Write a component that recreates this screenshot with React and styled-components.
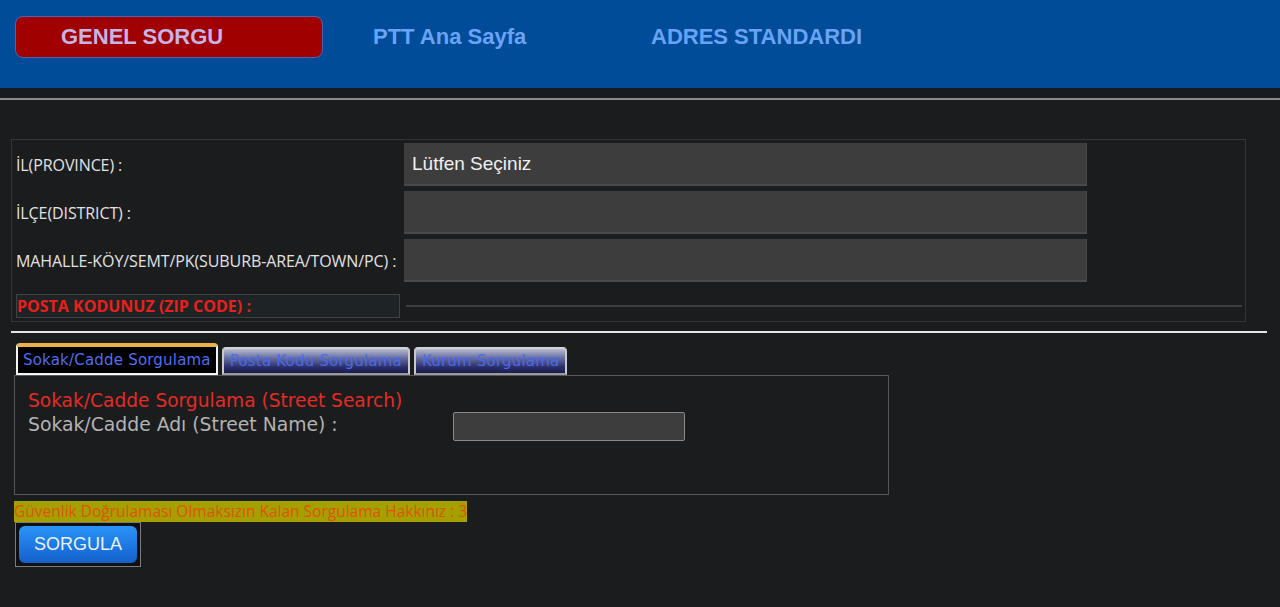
import React from "react"
import styled, {createGlobalStyle} from "styled-components"

const GlobalStyle = createGlobalStyle`
  html, body {
    margin: 0;
    padding: 0;
    background: #1b1c1e;
  }
  body {
    font-family: "Liberation Sans", Arial, sans-serif;
  }
`

const Page = styled.div`
  width: 1280px;
  height: 607px;
  overflow: hidden;
  background: #1b1c1e;
`

const Header = styled.div`
  height: 88px;
  background: #004c99;
  box-sizing: border-box;
  padding: 16px 0 0 15px;
  display: flex;
  flex-direction: row;
  align-items: flex-start;
`

const ActiveNav = styled.div`
  width: 308px;
  height: 42px;
  box-sizing: border-box;
  background: #a00000;
  border: 1px solid #4d63b0;
  border-radius: 8px;
  padding-left: 45px;
  display: flex;
  align-items: center;
  font-family: "Liberation Sans", Arial, sans-serif;
  font-weight: 700;
  font-size: 22px;
  color: #c7b4e6;
`

const NavLink = styled.div`
  width: ${props => props.width}px;
  height: 42px;
  margin-left: ${props => props.offset}px;
  display: flex;
  align-items: center;
  font-family: "Liberation Sans", Arial, sans-serif;
  font-weight: 700;
  font-size: 22px;
  color: #6aa3f5;
`

const HeaderShadow = styled.div`
  height: 10px;
  background: #171a1f;
  border-bottom: 2px solid #8a8a8a;
`

const Content = styled.div`
  padding: 39px 13px 0 11px;
`

const FormBox = styled.div`
  width: 1235px;
  box-sizing: border-box;
  border: 1px solid #333537;
  padding: 3px 0 3px 4px;
  display: flex;
  flex-direction: column;
  gap: 5px;
`

const FieldRow = styled.div`
  display: flex;
  flex-direction: row;
  align-items: center;
`

const FieldLabel = styled.div`
  width: 388px;
  font-family: "Open Sans", "Noto Sans", sans-serif;
  font-size: 16px;
  letter-spacing: -0.1px;
  color: #e2e2e2;
  white-space: nowrap;
`

const SelectBox = styled.div`
  width: 683px;
  height: 43px;
  box-sizing: border-box;
  background: #3d3d3d;
  border-bottom: 2px solid #4a4a4a;
  border-right: 1px solid #474747;
  padding-left: 8px;
  display: flex;
  align-items: center;
  font-family: "Liberation Sans", Arial, sans-serif;
  font-size: 19px;
  color: #f0f0f0;
`

const ZipRow = styled.div`
  display: flex;
  flex-direction: row;
  align-items: center;
  margin-top: 7px;
`

const ZipLabel = styled.div`
  width: 384px;
  height: 24px;
  box-sizing: border-box;
  border: 1px solid #3e4445;
  background: #1e2425;
  padding-left: 0;
  display: flex;
  align-items: center;
  font-family: "Open Sans", "Noto Sans", sans-serif;
  font-weight: 700;
  font-size: 16px;
  color: #e8201c;
  white-space: nowrap;
`

const ZipLine = styled.div`
  flex: 1;
  height: 2px;
  margin: 0 3px 0 6px;
  background: #3d3f41;
`

const Divider = styled.div`
  width: 1256px;
  height: 2px;
  margin-top: 9px;
  background: #e6e6e6;
`

const TabBar = styled.div`
  display: flex;
  flex-direction: row;
  align-items: flex-end;
  gap: 4px;
  margin-top: 10px;
  padding-left: 5px;
`

const Tab = styled.div`
  height: ${props => (props.active ? 32 : 28)}px;
  box-sizing: border-box;
  padding: 0 ${props => (props.active ? 5 : 6)}px;
  display: flex;
  align-items: center;
  border-radius: 4px 4px 0 0;
  font-family: "DejaVu Sans", Verdana, sans-serif;
  font-size: 15px;
  letter-spacing: 0.2px;
  white-space: nowrap;
  color: ${props => (props.active ? "#4f6ef0" : "#4a6ae8")};
  background: ${props =>
    props.active
      ? "#000"
      : "linear-gradient(to bottom, #b9bdd0 0%, #6b73a6 35%, #2b2f6a 75%, #1a1d4e 100%)"};
  border: 2px solid ${props => (props.active ? "#f4f4f4" : "#c9c9c9")};
  border-top: ${props => (props.active ? "4px solid #e8b14a" : "2px solid #d4d4d4")};
  ${props => (props.active ? "" : "border-bottom: 2px solid #9a9a9a;")}
`

const Panel = styled.div`
  width: 875px;
  height: 120px;
  box-sizing: border-box;
  margin-left: 3px;
  border: 1px solid #555759;
  padding: 13px 0 0 13px;
`

const PanelTitle = styled.div`
  font-family: "DejaVu Sans", Verdana, sans-serif;
  font-size: 18.6px;
  color: #e42b24;
  line-height: 24px;
`

const StreetRow = styled.div`
  display: flex;
  flex-direction: row;
  align-items: flex-start;
`

const StreetLabel = styled.div`
  width: 425px;
  font-family: "DejaVu Sans", Verdana, sans-serif;
  font-size: 18.8px;
  color: #b2b2b2;
  line-height: 24px;
`

const StreetInput = styled.input`
  width: 232px;
  height: 29px;
  box-sizing: border-box;
  margin-top: -1px;
  background: #3d3d3d;
  border: 1px solid #8a8a8a;
  border-radius: 2px;
  outline: none;
  color: #eee;
`

const Notice = styled.div`
  display: inline-block;
  margin: 6px 0 0 3px;
  height: 21px;
  line-height: 21px;
  background: #a3a000;
  font-family: "Open Sans", "Noto Sans", sans-serif;
  font-size: 15.5px;
  letter-spacing: 0;
  color: #e0510a;
  white-space: nowrap;
`

const ButtonFrame = styled.div`
  width: 126px;
  height: 45px;
  box-sizing: border-box;
  margin: 0 0 0 4px;
  border: 1px solid #7c7c7c;
  background: #0f1012;
  padding: 3px;
`

const SubmitButton = styled.button`
  width: 100%;
  height: 100%;
  border: none;
  border-radius: 6px;
  background: linear-gradient(to bottom, #2b94f5 0%, #1c74e0 60%, #1560c8 100%);
  font-family: "Liberation Sans", Arial, sans-serif;
  font-size: 18px;
  color: #e8f2ff;
  padding: 0;
`

export default function App() {
  return (
    <Page>
      <GlobalStyle/>
      <Header>
        <ActiveNav>GENEL SORGU</ActiveNav>
        <NavLink offset={50} width={278}>PTT Ana Sayfa</NavLink>
        <NavLink offset={0} width={260}>ADRES STANDARDI</NavLink>
      </Header>
      <HeaderShadow/>
      <Content>
        <FormBox>
          <FieldRow>
            <FieldLabel>İL(PROVINCE) :</FieldLabel>
            <SelectBox>Lütfen Seçiniz</SelectBox>
          </FieldRow>
          <FieldRow>
            <FieldLabel>İLÇE(DISTRICT) :</FieldLabel>
            <SelectBox/>
          </FieldRow>
          <FieldRow>
            <FieldLabel>MAHALLE-KÖY/SEMT/PK(SUBURB-AREA/TOWN/PC) :</FieldLabel>
            <SelectBox/>
          </FieldRow>
          <ZipRow>
            <ZipLabel>POSTA KODUNUZ (ZIP CODE) :</ZipLabel>
            <ZipLine/>
          </ZipRow>
        </FormBox>
        <Divider/>
        <TabBar>
          <Tab active>Sokak/Cadde Sorgulama</Tab>
          <Tab>Posta Kodu Sorgulama</Tab>
          <Tab>Kurum Sorgulama</Tab>
        </TabBar>
        <Panel>
          <PanelTitle>Sokak/Cadde Sorgulama (Street Search)</PanelTitle>
          <StreetRow>
            <StreetLabel>Sokak/Cadde Adı (Street Name) :</StreetLabel>
            <StreetInput type="text"/>
          </StreetRow>
        </Panel>
        <Notice>Güvenlik Doğrulaması Olmaksızın Kalan Sorgulama Hakkınız : 3</Notice>
        <ButtonFrame>
          <SubmitButton>SORGULA</SubmitButton>
        </ButtonFrame>
      </Content>
    </Page>
  )
}
